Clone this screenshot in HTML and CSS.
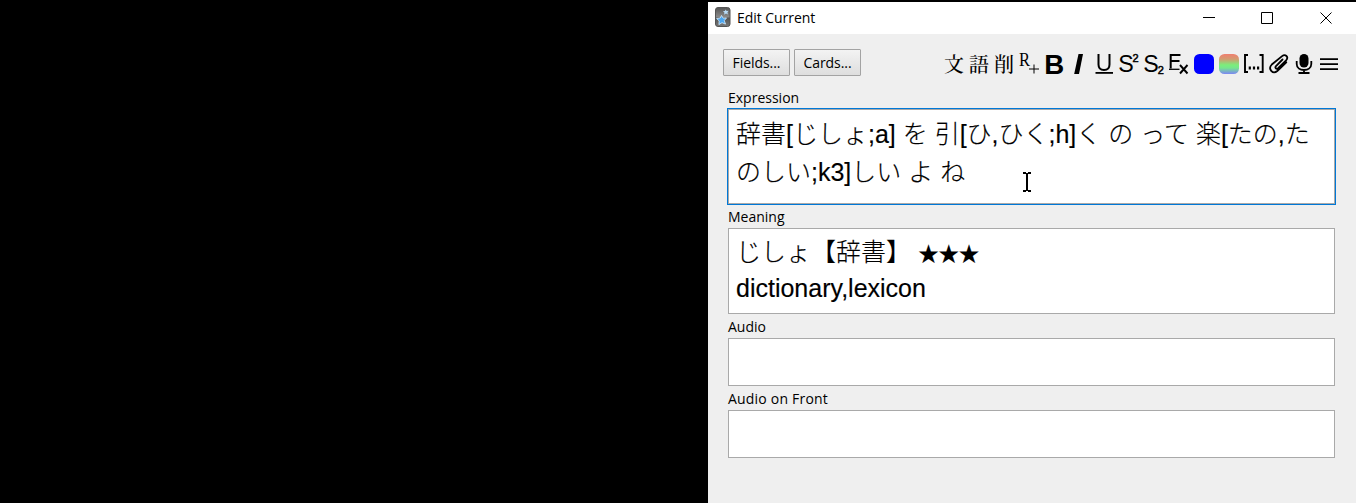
FILE: index.html
```html
<!DOCTYPE html>
<html lang="ja">
<head>
<meta charset="utf-8">
<title>Edit Current</title>
<link rel="stylesheet" href="styles.css">
</head>
<body>
<main class="window">
  <header class="titlebar">
    <svg class="app-icon" width="16" height="20" viewBox="0 0 16 20"><defs><linearGradient id="ag" x2="0" y2="1"><stop stop-color="#555"/><stop offset=".5" stop-color="#8a8a8a"/><stop offset=".55" stop-color="#555"/><stop offset="1" stop-color="#777"/></linearGradient></defs><rect x=".5" y=".5" width="14.5" height="19" rx="2.5" fill="url(#ag)" stroke="#555"/><path d="M6.500 8.500l1.600 2.600 3.400-.2-2.200 2.700 1.200 3.500-3.500-1.400-3.100 1.900.3-3.700-2.600-2.400 3.600-.5z" fill="#4ba5ef" stroke="#d8efff" stroke-width=".8"/><path d="M10.700 2.500l.9 1.500 2-.2-1.200 1.600.6 2-2-.8-1.800 1.100.2-2.100-1.500-1.400 2-.2z" fill="#b8dcf8"/></svg>
    <h1 class="title">Edit Current</h1>
    <svg class="controls" width="132" height="14" viewBox="0 0 132 14" fill="none" stroke="#000"><path d="M0 6.500h12"/><path d="M58.500 1.500h11v11h-11z"/><path d="M117.500 1.500l11 11m0-11l-11 11"/></svg>
  </header>
  <div class="toolbar">
    <div class="buttons"><button>Fields...</button><button>Cards...</button></div>
    <div class="tools">
      <span class="kanji">文</span><span class="kanji">語</span><span class="kanji">削</span>
      <svg viewBox="0 0 20 20"><text class="serif" x="0" y="12" font-size="18" textLength="11" lengthAdjust="spacingAndGlyphs">R</text><path d="M10 15h10M15 10.500v9" stroke="#000"/></svg>
      <svg viewBox="0 0 20 20"><text class="bold" x=".2" y="19.600" font-size="28.500" textLength="20" lengthAdjust="spacingAndGlyphs">B</text></svg>
      <svg viewBox="0 0 20 20"><path d="M9.500 0h4.500L10 20H5.200z"/></svg>
      <svg viewBox="0 0 20 20"><path d="M4.500 0v10.500q0 5.500 5.500 5.500t5.500-5.500V0" fill="none" stroke="#000" stroke-width="2"/><path d="M1.500 18h17.500v1.800h-17.500z"/></svg>
      <svg viewBox="0 0 20 20"><text x="-.8" y="18" font-size="24.500" textLength="15.500" lengthAdjust="spacingAndGlyphs">S</text><text x="13.500" y="8" font-size="11" stroke="#000" stroke-width=".5">2</text></svg>
      <svg viewBox="0 0 20 20"><text x="-.8" y="18" font-size="24.500" textLength="15.500" lengthAdjust="spacingAndGlyphs">S</text><text x="13.800" y="19.500" font-size="11" stroke="#000" stroke-width=".5">2</text></svg>
      <svg viewBox="0 0 20 20" fill="none" stroke="#000"><path d="M11.500 1H1.700v13.500M1.500 7H10.500" stroke-width="2"/><path d="M0 15.300h10.500" stroke-width="1.300"/><path d="M11 11l7.500 8.500M18.500 11L11 19.500" stroke-width="1.900"/></svg>
      <svg viewBox="0 0 20 20"><rect width="20" height="20" rx="5.500" fill="#00f"/></svg>
      <svg viewBox="0 0 20 20"><defs><linearGradient id="rb" x2="0" y2="1"><stop stop-color="#f07f70"/><stop offset=".25" stop-color="#d39a70"/><stop offset=".55" stop-color="#7bee7b"/><stop offset=".7" stop-color="#77e58d"/><stop offset="1" stop-color="#7c86f5"/></linearGradient></defs><rect width="20" height="20" rx="5.500" fill="url(#rb)"/></svg>
      <svg viewBox="0 0 20 20"><path d="M4 1H1v17h3M15.500 1h3.200v17h-3.200" fill="none" stroke="#000" stroke-width="1.900"/><path d="M4.700 12.500h2.200v3h-2.200zM8.900 12.500h2.200v3H8.900zM13 12.500h2.200v3H13z"/></svg>
      <svg viewBox="0 0 20 20" fill="none" stroke="#000" stroke-width="1.800" stroke-linecap="round"><path d="M13.500 5.500L7 12c-1.500 1.700.3 3.700 2.100 2.100l8-7.800c3-3.300-.8-6.800-4-4.200L2.800 10.500c-4.300 4.500 1 10.300 5.500 6.500l9-8.700"/></svg>
      <svg viewBox="0 0 20 20"><rect x="5.500" y="0" width="9" height="13.500" rx="4.500"/><path d="M2.700 7v3c0 8 14.600 8 14.600 0V7M10 15.500V19M4.500 19h11" fill="none" stroke="#000" stroke-width="1.800"/></svg>
      <svg viewBox="0 0 20 20"><path d="M1 4.200h18v1.800H1zM1 9.200h18V11H1zM1 14.200h18V16H1z"/></svg>
    </div>
  </div>
  <section class="fields">
    <label>Expression</label>
    <div class="box expression"><p>辞書[じしょ;a] を 引[ひ,ひく;h]く の って 楽[たの,た</p><p>のしい;k3]しい よ ね</p>
      <svg class="cursor" width="8" height="20" viewBox="0 0 8 20" shape-rendering="crispEdges"><path d="M0 0h3v1h2V0h3v2H5v16h3v2H5v-1H3v1H0v-2h3V2H0z"/></svg>
    </div>
    <label>Meaning</label>
    <div class="box meaning"><p>じしょ【辞書】 <span class="stars">★★★</span></p><p>dictionary,lexicon</p></div>
    <label>Audio</label>
    <div class="box empty"></div>
    <label class="wide">Audio on Front</label>
    <div class="box empty"></div>
  </section>
</main>
</body>
</html>
```
FILE: styles.css
```css
* { box-sizing: border-box; }
body { margin: 0; background: #000; height: 503px; overflow: hidden; padding: 2px 0 0 708px; }
.window { height: 501px; background: #efefef; font: 14px/20px "Open Sans", sans-serif; color: #000; }
.titlebar { height: 32px; background: #fff; display: flex; align-items: center; padding: 0 21px 0 7px; }
.app-icon { margin-right: 6px; margin-top: -2px; }
.title { font-size: 14px; font-weight: 400; margin: 0; letter-spacing: -.05px; }
.controls { margin-left: auto; }
.toolbar { height: 53px; display: flex; justify-content: space-between; padding: 15px 17px 0 15px; }
.buttons { display: flex; gap: 4px; }
button { width: 67px; height: 27px; padding: 0; border: 1px solid #a3a3a3; border-radius: 1px; background: linear-gradient(#f3f3f3, #dedede); font: 14px/20px "Open Sans", sans-serif; letter-spacing: -.05px; color: #000; }
.tools { display: flex; gap: 5px; padding-top: 5px; }
.tools svg { width: 20px; height: 20px; overflow: visible; font-family: "Liberation Sans", Arial, sans-serif; }
.tools .serif { font-family: "Liberation Serif", serif; }
.tools .bold { font-weight: 700; }
.kanji { width: 20px; height: 20px; font: 500 20px/20px "Noto Serif CJK JP", "Noto Sans CJK JP", serif; }
.fields { padding: 0 21px 0 20px; }
.fields label { display: block; height: 22px; line-height: 22px; letter-spacing: 0; }
.fields .wide { letter-spacing: .2px; }
.box { position: relative; border: 1px solid #a9a9a9; background: #fff; padding: 8px 7px; font: 300 25px/35px "Liberation Sans", Arial, "Noto Sans CJK JP", sans-serif; margin-bottom: 2px; }
.box p { margin: 0; white-space: nowrap; }
.expression { height: 95px; outline: 1px solid #0078d7; line-height: 38px; padding-top: 5px; }
.expression p, .meaning p { -webkit-text-stroke: .15px #000; }
.meaning { height: 86px; padding-top: 6px; }
.empty { height: 48px; }
.stars { font-size: 21px; letter-spacing: -.7px; }
.cursor { position: absolute; left: 294px; top: 62px; }
```
